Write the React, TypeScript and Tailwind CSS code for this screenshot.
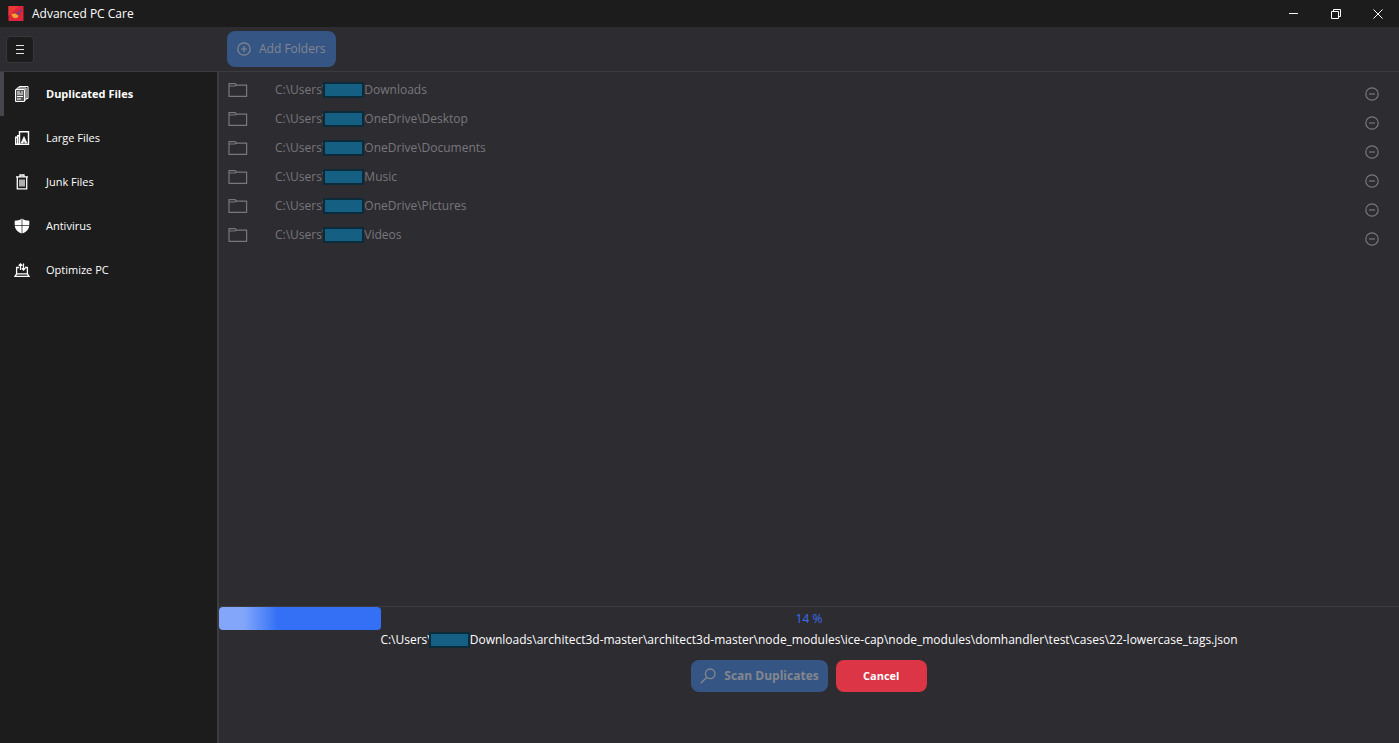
import { useState } from 'react'
import type { ReactNode } from 'react'
import clsx from 'clsx'

const folders = [
  'Downloads',
  'OneDrive\\Desktop',
  'OneDrive\\Documents',
  'Music',
  'OneDrive\\Pictures',
  'Videos',
]

const progress = 14

const currentFile =
  'Downloads\\architect3d-master\\architect3d-master\\node_modules\\ice-cap\\node_modules\\domhandler\\test\\cases\\22-lowercase_tags.json'

function LogoIcon() {
  return (
    <svg viewBox="0 0 16 16" className="size-4 shrink-0">
      <rect x="0.5" width="15" height="15" fill="#e0243c" />
      <path d="M.5 0h10l-10 10z" fill="#e93a35" />
      <path d="M10.200 7.200 12.800 3l.9.600-2.300 4.400z" fill="#3d4fa0" />
      <path d="m7.600 6 4 2.500-.8 1.300-4-2.400z" fill="#6c4a7c" />
      <path d="M3.300 7.800c1.300.3 2.400.1 3.500-.5l3.800 2.500c-.5 1.400-1.500 2.300-3.200 2.400-2.100 0-3.600-1.700-4.100-4.400z" fill="#fba42c" />
    </svg>
  )
}

function DuplicatesIcon() {
  return (
    <svg viewBox="0 0 16 16" className="size-4" fill="none" stroke="currentColor">
      <path d="M1.500 3.500h9v12h-9z" fill="#555" />
      <path d="M3 3.500V2h9v12h-1.500M5 2V.5h9v12h-2" />
      <path d="M3 6h3M7 6h2M3 8h6M3 10.500h6M3 13h4" strokeWidth="1.200" />
    </svg>
  )
}

function LargeFilesIcon() {
  return (
    <svg viewBox="0 0 16 16" className="size-4" fill="none" stroke="currentColor" strokeWidth="1.400">
      <path d="M5.500 1.700h9v12.600h-9z" />
      <path d="M5.500 5.700H3.700v1.500h-2v7.100h3.800M3.700 7.200v7" />
      <path d="m7 13 3-6.500 3 6.500h-2l-1-2-1 2z" fill="currentColor" strokeWidth="0.500" />
    </svg>
  )
}

function JunkIcon() {
  return (
    <svg viewBox="0 0 16 16" className="size-4" fill="none" stroke="currentColor" strokeWidth="1.300">
      <path d="M2 2.800h12M6 2.500V1h4v1.500M3.300 3v11.800h9.400V3" />
      <path d="M6 5.500v7M8 5.500v7M10 5.500v7" />
    </svg>
  )
}

function ShieldIcon() {
  return (
    <svg viewBox="0 0 16 16" className="size-4">
      <path d="M8 .5C6 2 3.500 2.700.7 2.700v4C.7 11 3.500 14 8 15.600c4.500-1.600 7.300-4.600 7.300-8.900v-4C12.500 2.700 10 2 8 .5z" fill="currentColor" />
      <path d="M8 0v16M0 7.500h16" stroke="#1c1c1c" strokeWidth="0.700" />
    </svg>
  )
}

function OptimizeIcon() {
  return (
    <svg viewBox="0 0 16 16" className="size-4" fill="none" stroke="currentColor" strokeWidth="1.300">
      <path d="M5 5.500H2.600v6.300h10.800V5.500H11" />
      <path d="M2.600 11.800 1 14.400h14l-1.600-2.600" />
      <path d="M6.500 8V2M4.800 3.800l1.700-1.900 1.700 1.900M9.500 1.500V8M7.900 6.300l1.600 1.800 1.700-1.800" />
    </svg>
  )
}

function FolderIcon() {
  return (
    <svg viewBox="0 0 20 16" className="h-4 w-5 shrink-0" fill="none" stroke="currentColor" strokeWidth="1.200">
      <path d="M1 14.400V1.600h6.200l1.300 1.500h10.100v11.300z" />
      <path d="M1 4h5.800l1.700-.9" />
    </svg>
  )
}

function AddIcon() {
  return (
    <svg viewBox="0 0 14 14" className="size-3.5 shrink-0" fill="none" stroke="currentColor" strokeWidth="1.200">
      <circle cx="7" cy="7" r="6.200" />
      <path d="M7 4v6M4 7h6" />
    </svg>
  )
}

function RemoveIcon() {
  return (
    <svg viewBox="0 0 14 14" className="size-3.5" fill="none" stroke="currentColor" strokeWidth="1.200">
      <circle cx="7" cy="7" r="6.200" />
      <path d="M4 7h6" />
    </svg>
  )
}

function SearchIcon() {
  return (
    <svg viewBox="0 0 16 16" className="size-4 shrink-0" fill="none" stroke="currentColor" strokeWidth="1.300">
      <circle cx="10.200" cy="5.800" r="4.800" />
      <path d="m6.800 9.200-6 6" />
    </svg>
  )
}

const menu: { label: string; icon: ReactNode }[] = [
  { label: 'Duplicated Files', icon: <DuplicatesIcon /> },
  { label: 'Large Files', icon: <LargeFilesIcon /> },
  { label: 'Junk Files', icon: <JunkIcon /> },
  { label: 'Antivirus', icon: <ShieldIcon /> },
  { label: 'Optimize PC', icon: <OptimizeIcon /> },
]

// covers the user name, and the edge of the separator before it
function HiddenName() {
  return (
    <span className="relative -ml-[3px] h-4 w-[41px] shrink-0 border-2 border-[#0b2b3a] bg-[#156082]" />
  )
}

function TitleBar() {
  return (
    <header className="flex h-[27px] shrink-0 items-center bg-[#1c1c1c] pl-2 text-white">
      <LogoIcon />
      <h1 className="ml-2 flex-1 text-xs">Advanced PC Care</h1>
      <button type="button" aria-label="Minimize" className="grid h-full w-[42px] place-items-center">
        <svg viewBox="0 0 10 10" className="size-2.5" stroke="currentColor">
          <path d="M0 4.500h9" />
        </svg>
      </button>
      <button type="button" aria-label="Restore" className="grid h-full w-[42px] place-items-center">
        <svg viewBox="0 0 10 10" className="size-2.5" fill="none" stroke="currentColor">
          <path d="M.5 2.500h7v7h-7z" />
          <path d="M2.500 2V.5h7v7H8" />
        </svg>
      </button>
      <button type="button" aria-label="Close" className="grid h-full w-[42px] place-items-center">
        <svg viewBox="0 0 10 10" className="size-2.5" stroke="currentColor">
          <path d="m.5.5 9 9M9.500.5l-9 9" />
        </svg>
      </button>
    </header>
  )
}

export default function App() {
  const [active, setActive] = useState('Duplicated Files')

  return (
    <div className="flex h-screen flex-col bg-[#2d2c31] font-['Open_Sans','Noto_Sans',sans-serif]">
      <TitleBar />

      <div className="flex h-11 shrink-0 items-center pl-[6px]">
        <div className="w-[221px]">
          <button
            type="button"
            aria-label="Toggle menu"
            className="grid h-[27px] w-7 place-items-center rounded border border-[#38373c] bg-[#1c1c1c] text-zinc-200"
          >
            <svg viewBox="0 0 10 10" className="size-2.5" stroke="currentColor">
              <path d="M1 1.500h8M1 5.500h8M1 9.500h8" />
            </svg>
          </button>
        </div>
        <button
          type="button"
          disabled
          className="flex h-9 items-center gap-2 rounded-lg bg-[#355584] px-[10px] text-xs text-[#83878f]"
        >
          <AddIcon />
          Add Folders
        </button>
      </div>

      <div className="flex min-h-0 flex-1">
        <nav className="w-[219px] shrink-0 border-t border-r-2 border-[#3c3b40] bg-[#1c1c1c]">
          {menu.map(({ label, icon }) => (
            <button
              key={label}
              type="button"
              onClick={() => setActive(label)}
              className={clsx(
                'flex h-11 w-full items-center gap-4 border-l-4 pl-[10px] text-[11px] text-white',
                active === label ? 'border-[#46454b] font-bold' : 'border-transparent',
              )}
            >
              {icon}
              {label}
            </button>
          ))}
        </nav>

        <main className="flex min-w-0 flex-1 flex-col">
          <ul className="flex-1 border-y border-[#3c3b40] pt-[3px]">
            {folders.map((folder) => (
              <li
                key={folder}
                className="flex h-[29px] items-center pr-5 pl-[9px] text-xs text-[#78777b]"
              >
                <FolderIcon />
                <span className="ml-[27px] flex flex-1 items-center">
                  <span>C:\Users\</span>
                  <HiddenName />
                  <span>{folder}</span>
                </span>
                <button type="button" aria-label={`Remove ${folder}`} className="mt-2">
                  <RemoveIcon />
                </button>
              </li>
            ))}
          </ul>

          <section className="flex h-[136px] shrink-0 flex-col">
            <div className="grid h-[23px]">
              <div
                role="progressbar"
                aria-label="Scan progress"
                aria-valuenow={progress}
                className="col-start-1 row-start-1 rounded bg-linear-to-r from-[#83a6fb] from-15% to-[#3370f5] to-36%"
                style={{ width: `${progress - 0.3}%` }}
              />
              <span className="col-start-1 row-start-1 self-center text-center text-xs text-[#3a6cf0]">
                {progress} %
              </span>
            </div>
            <p className="flex h-5 items-center justify-center text-xs text-white">
              <span>C:\Users\</span>
              <HiddenName />
              <span>{currentFile}</span>
            </p>
            <div className="mt-[10px] flex justify-center gap-2">
              <button
                type="button"
                disabled
                className="flex h-8 items-center gap-2 rounded-lg bg-[#355584] px-[9px] text-xs font-bold text-[#83878f]"
              >
                <SearchIcon />
                Scan Duplicates
              </button>
              <button
                type="button"
                className="h-8 w-[91px] rounded-lg bg-[#dc3545] text-[11px] font-bold text-white"
              >
                Cancel
              </button>
            </div>
          </section>
        </main>
      </div>
    </div>
  )
}
